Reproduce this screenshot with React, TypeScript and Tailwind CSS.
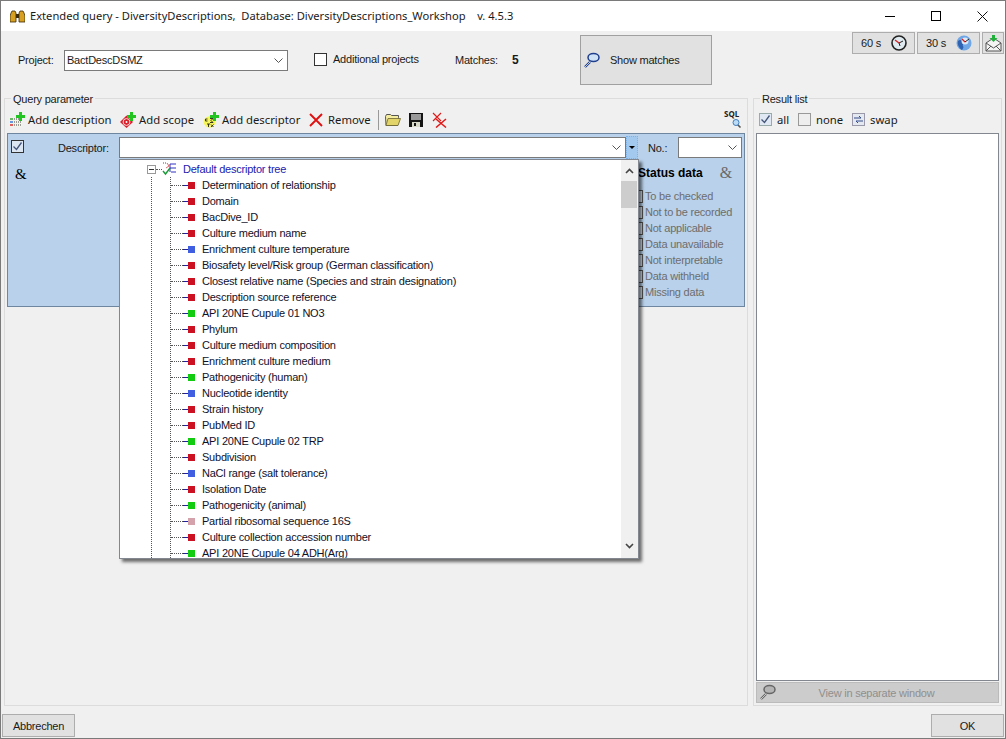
const sans = { fontFamily: '"Liberation Sans", Arial, sans-serif' }
const ui = { fontFamily: '"Noto Sans", sans-serif' }
const serif = { fontFamily: '"Liberation Serif", serif' }

type Kind = "red" | "blue" | "green" | "pink"

const descriptors: { label: string; kind: Kind }[] = [
  { label: "Determination of relationship", kind: "red" },
  { label: "Domain", kind: "red" },
  { label: "BacDive_ID", kind: "red" },
  { label: "Culture medium name", kind: "red" },
  { label: "Enrichment culture temperature", kind: "blue" },
  { label: "Biosafety level/Risk group (German classification)", kind: "red" },
  { label: "Closest relative name (Species and strain designation)", kind: "red" },
  { label: "Description source reference", kind: "red" },
  { label: "API 20NE Cupule 01 NO3", kind: "green" },
  { label: "Phylum", kind: "red" },
  { label: "Culture medium composition", kind: "red" },
  { label: "Enrichment culture medium", kind: "red" },
  { label: "Pathogenicity (human)", kind: "green" },
  { label: "Nucleotide identity", kind: "blue" },
  { label: "Strain history", kind: "red" },
  { label: "PubMed ID", kind: "red" },
  { label: "API 20NE Cupule 02 TRP", kind: "green" },
  { label: "Subdivision", kind: "red" },
  { label: "NaCl range (salt tolerance)", kind: "blue" },
  { label: "Isolation Date", kind: "red" },
  { label: "Pathogenicity (animal)", kind: "green" },
  { label: "Partial ribosomal sequence 16S", kind: "pink" },
  { label: "Culture collection accession number", kind: "red" },
  { label: "API 20NE Cupule 04 ADH(Arg)", kind: "green" },
]

const kindColor: Record<Kind, string> = {
  red: "bg-[#cc1122]",
  blue: "bg-[#3f5fe0]",
  green: "bg-[#12cc12]",
  pink: "bg-[#d4a2aa]",
}

const statusItems = [
  "To be checked",
  "Not to be recorded",
  "Not applicable",
  "Data unavailable",
  "Not interpretable",
  "Data withheld",
  "Missing data",
]

function Chevron({ className = "" }: { className?: string }) {
  return (
    <svg width="9" height="5" viewBox="0 0 9 5" className={className}>
      <path d="M.5.5l4 4 4-4" fill="none" stroke="#555" strokeWidth="1" />
    </svg>
  )
}

function PlusMark() {
  return <path d="M10 0h3v3h3v3h-3v3h-3V6H7V3h3z" fill="#22c422" />
}

function DescriptionIcon() {
  return (
    <svg width="17" height="16" viewBox="0 0 17 16">
      <rect x="0" y="5" width="13" height="10" fill="#f4f4ea" />
      <path d="M1 7h3" stroke="#2a9f2a" strokeWidth="1.4" />
      <path d="M1 10h3" stroke="#2a6fdc" strokeWidth="1.4" />
      <path d="M1 13h3" stroke="#d82020" strokeWidth="1.4" />
      <path d="M5 7h7M5 10h7M5 13h7" stroke="#444" strokeWidth="1.2" strokeDasharray="1 1" />
      <PlusMark />
    </svg>
  )
}

function ScopeIcon() {
  return (
    <svg width="17" height="16" viewBox="0 0 17 16">
      <path d="M6.5 3.5l6.5 6.5-6.5 6-6.5-6z" fill="#d81f2a" />
      <circle cx="6.5" cy="10" r="3.4" fill="none" stroke="#fbdada" strokeWidth="1" />
      <circle cx="6.5" cy="10" r="1" fill="#fff" />
      <PlusMark />
    </svg>
  )
}

function DescriptorIcon() {
  return (
    <svg width="17" height="16" viewBox="0 0 17 16">
      <circle cx="6.5" cy="10" r="5.8" fill="#f6f65a" />
      <path d="M2.5 7h2M2.5 7v2h2M7 6.5h3L8 8.5l2 2H7M4 12h3M5.5 12v3M8 12.5l2.5 2.5M10.5 12.5L8 15" fill="none" stroke="#222" strokeWidth=".9" />
      <PlusMark />
    </svg>
  )
}

function RedCross({ size = 14 }: { size?: number }) {
  return (
    <svg width={size} height={size} viewBox="0 0 14 14">
      <path d="M1 1l12 12M13 1L1 13" stroke="#e01010" strokeWidth="1.9" />
    </svg>
  )
}

function FolderIcon() {
  return (
    <svg width="16" height="14" viewBox="0 0 16 14">
      <path d="M.5 3.5l1-2h4l1 1h7v2l-1 8H1z" fill="#f4eda0" stroke="#555" />
      <path d="M3 5.5h12.5l-2.5 7H1z" fill="#e2d468" stroke="#6b6330" strokeWidth=".8" />
    </svg>
  )
}

function SaveIcon() {
  return (
    <svg width="14" height="14" viewBox="0 0 14 14">
      <rect width="14" height="14" fill="#141414" />
      <rect x="2" y="1" width="10" height="6" fill="#9a9a9a" />
      <rect x="3" y="9" width="8" height="5" fill="#d8d8c8" />
      <rect x="5" y="10" width="2" height="3" fill="#141414" />
    </svg>
  )
}

function MultiCrossIcon() {
  return (
    <svg width="15" height="16" viewBox="0 0 15 16">
      <path d="M1 1l8 8M9 1L1 9" stroke="#e01818" strokeWidth="1.1" />
      <path d="M4 7l10 8.5M14 7L4 15.5" stroke="#e01818" strokeWidth="1.5" />
    </svg>
  )
}

function Magnifier({ gray = false }: { gray?: boolean }) {
  const ring = gray ? "#666" : "#1f3f8f"
  const glass = gray ? "#b4b4b4" : "#cfe2f5"
  return (
    <svg width="17" height="17" viewBox="0 0 17 17">
      <path d="M7 10l-5 5" stroke={ring} strokeWidth="2.4" />
      <path d="M7 10l-5 5" stroke={gray ? "#ddd" : "#e8e8f0"} strokeWidth=".8" />
      <ellipse cx="10.5" cy="5.5" rx="5.5" ry="4" fill={glass} stroke={ring} strokeWidth="1.5" />
    </svg>
  )
}

function ClockIcon() {
  return (
    <svg width="16" height="16" viewBox="0 0 16 16">
      <circle cx="8" cy="8" r="7" fill="#dfeaf0" stroke="#222" strokeWidth="1.6" />
      <path d="M8 8L4 5" stroke="#d82020" strokeWidth="1.3" />
      <path d="M8 8l4-2M8 8l1 3" stroke="#222" />
    </svg>
  )
}

function GlobeClockIcon() {
  return (
    <svg width="16" height="16" viewBox="0 0 16 16">
      <circle cx="8" cy="8" r="7.5" fill="#6ea6e6" />
      <path d="M2 6c2-2 4-1 5 1s-1 3 0 4 0 3-1 4C3 13 1 9 2 6z" fill="#2f62b0" />
      <circle cx="9" cy="6" r="3.5" fill="#dbe8f6" />
      <path d="M9 7L6 4" stroke="#d82020" strokeWidth="1.2" />
      <path d="M9 7l4-3" stroke="#222" />
    </svg>
  )
}

function MailIcon() {
  return (
    <svg width="17" height="17" viewBox="0 0 17 17">
      <path d="M1 8l7.5-5L16 8v8H1z" fill="#f4f4f4" stroke="#555" />
      <path d="M1 8l7.5 5L16 8M1 16l5-5M16 16l-5-5" fill="none" stroke="#555" />
      <path d="M7 0h3v3h2.5l-4 4-4-4H7z" fill="#1faf3a" />
    </svg>
  )
}

function SqlIcon() {
  return (
    <div className="relative h-[17px] w-[18px]" style={ui}>
      <span className="absolute left-0 top-[-2px] text-[8px] font-bold leading-[10px] text-[#222]">SQL</span>
      <svg width="10" height="9" viewBox="0 0 10 9" className="absolute bottom-0 right-0">
        <path d="M5 5l3.5 3.5" stroke="#555" strokeWidth="1.6" />
        <circle cx="4" cy="3.5" r="3" fill="#bcdcf5" stroke="#3f7fbf" />
      </svg>
    </div>
  )
}

function TreeIcon() {
  return (
    <svg width="15" height="14" viewBox="0 0 15 14">
      <path d="M1 1h4" stroke="#d02020" strokeDasharray="1 1" />
      <path d="M8 2h6M8 6h6M9 10h5M8 2v8" stroke="#3030c0" />
      <path d="M5 1l2 3-3 2" fill="none" stroke="#d04040" strokeWidth=".8" />
      <path d="M1 9l2.5 3L8 6" fill="none" stroke="#1c9a3a" strokeWidth="1.4" />
    </svg>
  )
}

function CheckBox({ checked = false, className = "" }: { checked?: boolean; className?: string }) {
  return (
    <span className={`flex h-[13px] w-[13px] shrink-0 items-center justify-center border ${className || "border-[#333] bg-white"}`}>
      {checked && (
        <svg width="11" height="11" viewBox="0 0 11 11">
          <path d="M1.5 5.5l3 3 5-7" fill="none" stroke="#44557a" strokeWidth="1.3" />
        </svg>
      )}
    </span>
  )
}

function DescriptorDropdown() {
  return (
    <div className="absolute left-[111px] top-[25px] z-10 flex h-[400px] w-[520px] border border-[#828790] bg-white shadow-[3px_3px_3px_rgba(0,0,0,0.55)]">
      <div className="relative h-full flex-1 overflow-hidden pt-[1px]">
        <div className="absolute bottom-0 left-[31px] top-[17px] border-l border-dotted border-[#555]" />
        <div className="absolute bottom-0 left-[50px] top-[17px] border-l border-dotted border-[#555]" />
        <div className="relative flex h-4 items-center pl-[27px]">
          <span className="flex h-[9px] w-[9px] items-center justify-center border border-[#999] bg-white">
            <span className="h-px w-[5px] bg-[#333]" />
          </span>
          <span className="w-[6px] border-t border-dotted border-[#555]" />
          <TreeIcon />
          <span className="ml-[6px] text-[#2020b0]">Default descriptor tree</span>
        </div>
        {descriptors.map((d) => (
          <div key={d.label} className="relative flex h-4 items-center whitespace-nowrap pl-[51px]">
            <span className="w-[12px] border-t border-dotted border-[#555]" />
            <span className="h-px w-[5px] bg-[#2020a0]" />
            <span className={`h-[7px] w-[7px] ${kindColor[d.kind]}`} />
            <span className="ml-[7px] text-[#10102a]">{d.label}</span>
          </div>
        ))}
      </div>
      <div className="flex h-full w-[17px] flex-col items-center bg-[#f0f0f0] pr-[1px]">
        <div className="flex h-[21px] items-center">
          <svg width="9" height="6" viewBox="0 0 9 6">
            <path d="M1 5l3.5-3.5L8 5" fill="none" stroke="#444" strokeWidth="1.6" />
          </svg>
        </div>
        <div className="h-[27px] w-full bg-[#cdcdcd]" />
        <div className="flex-1" />
        <div className="flex h-[21px] items-center pb-[3px]">
          <svg width="9" height="6" viewBox="0 0 9 6">
            <path d="M1 1l3.5 3.5L8 1" fill="none" stroke="#444" strokeWidth="1.6" />
          </svg>
        </div>
      </div>
    </div>
  )
}

export default function App() {
  return (
    <div
      style={sans}
      className="flex h-[739px] w-[1006px] flex-col overflow-hidden border border-[#7a7a7a] bg-[#f0f0f0] text-[11px] leading-4 tracking-[-0.22px] text-[#1a1a1a]"
    >
      {/* Title bar */}
      <div className="flex h-[30px] shrink-0 items-center bg-white pl-[9px] text-[11.15px] tracking-normal" style={ui}>
        <svg width="15" height="13" viewBox="0 0 15 13">
          <path d="M1 3l1-2h3l1 2v9H0V6zM9 3l1-2h3l1 2 1 3v6H9z" fill="#d8a020" stroke="#3a2a08" strokeWidth=".8" />
          <rect x="6" y="4" width="3" height="4" fill="#3a2a08" />
        </svg>
        <span className="ml-[5px] whitespace-pre">Extended query - DiversityDescriptions,  Database: DiversityDescriptions_Workshop    v. 4.5.3</span>
        <div className="ml-auto flex items-center text-black">
          <div className="flex h-[30px] w-[46px] items-center justify-center">
            <span className="h-px w-[10px] bg-black" />
          </div>
          <div className="flex h-[30px] w-[46px] items-center justify-center">
            <span className="h-[10px] w-[10px] border border-black" />
          </div>
          <div className="flex h-[30px] w-[46px] items-center justify-center">
            <svg width="11" height="11" viewBox="0 0 11 11">
              <path d="M.5.5l10 10M10.5.5l-10 10" stroke="#111" />
            </svg>
          </div>
        </div>
      </div>

      {/* Project row */}
      <div className="flex h-[67px] shrink-0 items-start">
        <span className="ml-[17px] mt-[21px] w-[46px]">Project:</span>
        <div className="mt-[19px] flex h-[21px] w-[224px] items-center justify-between border border-[#7a7a7a] bg-white pb-[2px] pl-[2px] pr-[4px]">
          <span>BactDescDSMZ</span>
          <Chevron className="mt-[2px]" />
        </div>
        <CheckBox className="ml-[26px] mt-[22px] border-[#333] bg-white" />
        <span className="ml-[6px] mt-[20px] w-[86px] whitespace-nowrap">Additional projects</span>
        <span className="ml-[36px] mt-[21px] w-[44px]">Matches:</span>
        <span className="ml-[13px] mt-[21px] w-[7px] text-[12px] font-bold">5</span>
        <div className="ml-[61px] mt-[4px] flex h-[50px] w-[132px] items-center border border-[#a0a0a0] bg-[#e1e1e1] pl-[2px]">
          <Magnifier />
          <span className="ml-[10px]">Show matches</span>
        </div>
        <div className="ml-auto mr-[1px] mt-[1px] flex gap-[2px]">
          <div className="flex h-[22px] w-[63px] items-center justify-between border border-[#adadad] bg-[#e1e1e1] pl-[8px] pr-[7px]">
            <span>60 s</span>
            <ClockIcon />
          </div>
          <div className="flex h-[22px] w-[63px] items-center justify-between border border-[#adadad] bg-[#e1e1e1] pl-[8px] pr-[7px]">
            <span>30 s</span>
            <GlobeClockIcon />
          </div>
          <div className="flex h-[22px] w-[22px] items-center justify-center border border-[#adadad] bg-[#e1e1e1]">
            <MailIcon />
          </div>
        </div>
      </div>

      {/* Group boxes */}
      <div className="flex min-h-0 flex-1 gap-[5px] px-[3px]">
        <div className="relative flex w-[744px] flex-col border border-[#dcdcdc] px-[2px] pt-[9px]">
          <span className="absolute left-[6px] top-[-8px] bg-[#f0f0f0] px-[2px]">Query parameter</span>
          <div className="flex h-[25px] items-center pb-[2px] pl-[2px] pr-[3px] text-[11.3px] tracking-normal" style={ui}>
            <DescriptionIcon />
            <span className="ml-[2px] w-[84px] whitespace-nowrap">Add description</span>
            <span className="ml-[8px]"><ScopeIcon /></span>
            <span className="ml-[2px] w-[57px] whitespace-nowrap">Add scope</span>
            <span className="ml-[7px]"><DescriptorIcon /></span>
            <span className="ml-[2px] w-[78px] whitespace-nowrap">Add descriptor</span>
            <span className="ml-[9px]"><RedCross /></span>
            <span className="ml-[5px] w-[42px]">Remove</span>
            <span className="ml-[8px] h-[20px] w-px bg-[#999]" />
            <span className="ml-[6px]"><FolderIcon /></span>
            <span className="ml-[8px]"><SaveIcon /></span>
            <span className="ml-[9px]"><MultiCrossIcon /></span>
            <div className="ml-auto">
              <SqlIcon />
            </div>
          </div>

          <div className="relative h-[174px] border border-[#6f86a0] bg-[#b9d1ea]">
            <div className="flex items-start pl-[3px] pt-[6px]">
              <CheckBox checked className="border-[#333] bg-[#dce6f2]" />
              <span className="ml-[34px] w-[50px]">Descriptor:</span>
              <div className="ml-[11px] mt-[-3px] flex h-[21px] w-[507px] items-center justify-end border border-[#7a7a7a] bg-white pr-[4px]">
                <Chevron />
              </div>
              <div className="mt-[-4px] flex h-[23px] w-[12px] items-center justify-center border border-dotted border-[#7ab4ee] bg-[#a3c9ee]">
                <span className="h-0 w-0 border-x-[3px] border-t-[3px] border-x-transparent border-t-black" />
              </div>
              <span className="ml-[10px] w-[20px]">No.:</span>
              <div className="ml-[10px] mt-[-3px] flex h-[21px] w-[64px] items-center justify-end border border-[#7a7a7a] bg-white pr-[4px]">
                <Chevron />
              </div>
            </div>
            <div className="pl-[7px] pt-[7px] text-[15px] text-black" style={serif}>
              &amp;
            </div>
            <div className="absolute left-[630px] top-[31px] w-[108px]">
              <div className="flex items-center justify-between pr-[14px]">
                <span className="text-[12px] font-bold tracking-normal text-black">Status data</span>
                <span className="text-[16px] text-[#6a6a6a]" style={serif}>&amp;</span>
              </div>
              <div className="mt-[7px] flex flex-col">
                {statusItems.map((s) => (
                  <div key={s} className="flex h-4 items-center whitespace-nowrap">
                    <span className="mr-[2px] h-[13px] w-[5px] shrink-0 border-y border-r border-[#555] bg-[#d8e4f0]" />
                    <span className="text-[#6d6d6d]">{s}</span>
                  </div>
                ))}
              </div>
            </div>
            <DescriptorDropdown />
          </div>
        </div>

        <div className="relative flex w-[249px] flex-col border border-[#dcdcdc] px-[2px] pt-[9px]">
          <span className="absolute left-[6px] top-[-8px] bg-[#f0f0f0] px-[2px]">Result list</span>
          <div className="flex h-[25px] items-center pb-[2px] pl-[3px] text-[11.3px] tracking-normal" style={ui}>
            <CheckBox checked className="border-[#9aa] bg-[#dfe8f3]" />
            <span className="ml-[5px] w-[12px]">all</span>
            <CheckBox className="ml-[9px] border-[#999] bg-[#eee]" />
            <span className="ml-[5px] w-[29px]">none</span>
            <span className="ml-[7px] flex h-[13px] w-[13px] items-center justify-center border border-[#99a] bg-[#e4e8f0]">
              <svg width="9" height="9" viewBox="0 0 9 9">
                <path d="M0 3h7M5 1l2 2M9 6H2M4 8L2 6" fill="none" stroke="#334a88" />
              </svg>
            </span>
            <span className="ml-[5px]">swap</span>
          </div>
          <div className="min-h-0 flex-1 border border-[#828790] bg-white" />
          <div className="mb-[2px] mt-[1px] flex h-[21px] shrink-0 items-center border border-[#bbb] bg-[#cccccc] pl-[2px]">
            <Magnifier gray />
            <span className="flex-1 pr-[21px] text-center text-[#8f8f8f]">View in separate window</span>
          </div>
        </div>
      </div>

      {/* Footer */}
      <div className="flex h-[32px] shrink-0 items-end justify-between px-[1px] pb-[1px]">
        <div className="flex h-[23px] w-[73px] items-center justify-center border border-[#adadad] bg-[#e1e1e1]">Abbrechen</div>
        <div className="flex h-[23px] w-[73px] items-center justify-center border border-[#adadad] bg-[#e1e1e1]">OK</div>
      </div>
    </div>
  )
}
